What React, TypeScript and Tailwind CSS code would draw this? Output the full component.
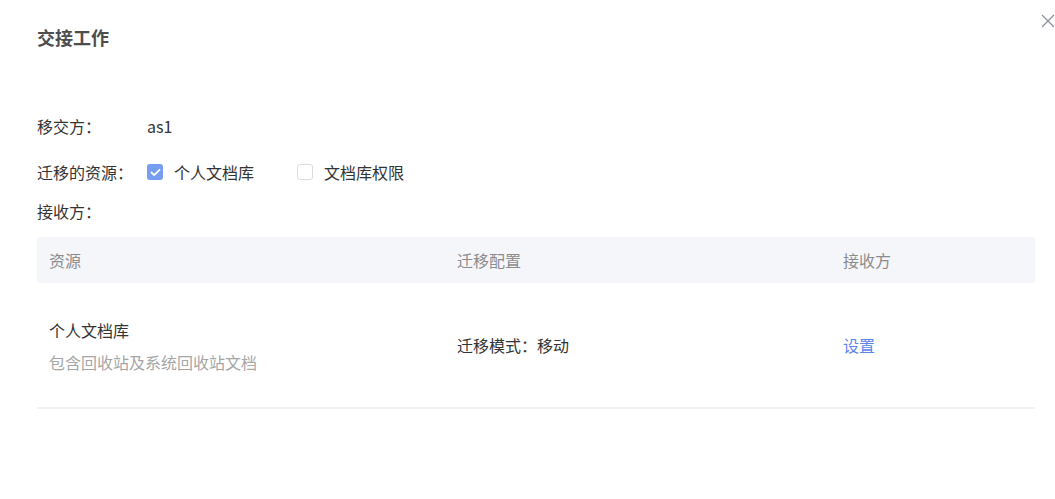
import React from "react";

const font = { fontFamily: '"Noto Sans CJK SC", "Noto Sans", sans-serif' };

function Check({ checked }: { checked: boolean }) {
  return checked ? (
    <span className="w-4 h-4 rounded-[3px] bg-[#779df0] flex items-center justify-center">
      <svg width="11" height="9" viewBox="0 0 11 9" fill="none">
        <path d="M1.5 4.5L4.2 7.2L9.5 1.8" stroke="#fff" strokeWidth="1.8" strokeLinecap="round" strokeLinejoin="round" />
      </svg>
    </span>
  ) : (
    <span className="w-4 h-4 rounded-[3px] border border-[#d9dbe0] bg-white" />
  );
}

export default function App() {
  return (
    <div className="relative w-[1055px] h-[499px] bg-white text-[#333] overflow-hidden" style={font}>
      <button className="absolute right-[-1px] top-[13px] w-4 h-4 flex items-center justify-center">
        <svg width="14" height="14" viewBox="0 0 14 14" fill="none">
          <path d="M1 1L13 13M13 1L1 13" stroke="#8a8f99" strokeWidth="1.3" />
        </svg>
      </button>
      <div className="pl-[37px] pr-[20px]">
        <div className="pt-[24px] h-[62px] text-[18px] leading-[26px] font-bold text-[#4d4d4d]">交接工作</div>
        <div className="mt-[52px] flex items-center h-[24px] text-[16px]">
          <span className="w-[110px]">移交方：</span>
          <span>as1</span>
        </div>
        <div className="mt-[22px] flex items-center h-[24px] text-[16px]">
          <span className="w-[110px]">迁移的资源：</span>
          <label className="flex items-center gap-[11px] w-[150px]">
            <Check checked />
            <span>个人文档库</span>
          </label>
          <label className="flex items-center gap-[11px]">
            <Check checked={false} />
            <span>文档库权限</span>
          </label>
        </div>
        <div className="mt-[15px] h-[24px] flex items-center text-[16px]">接收方：</div>
        <div className="mt-[14px] w-[998px]">
          <div className="h-[46px] bg-[#f5f6fa] flex items-center text-[16px] text-[#8c8c8c]">
            <span className="w-[408px] pl-[12px]">资源</span>
            <span className="w-[386px] pl-[12px]">迁移配置</span>
            <span className="pl-[12px]">接收方</span>
          </div>
          <div className="h-[126px] border-b-2 border-[#f0f0f2] flex items-center text-[16px]">
            <div className="w-[408px] pl-[12px] flex flex-col gap-[8px] pt-[2px]">
              <span className="leading-[24px] text-[#333]">个人文档库</span>
              <span className="leading-[24px] text-[#a6a6a6]">包含回收站及系统回收站文档</span>
            </div>
            <div className="w-[386px] pl-[12px]">迁移模式：移动</div>
            <div className="pl-[12px] text-[#5b86ee]">设置</div>
          </div>
        </div>
      </div>
    </div>
  );
}
